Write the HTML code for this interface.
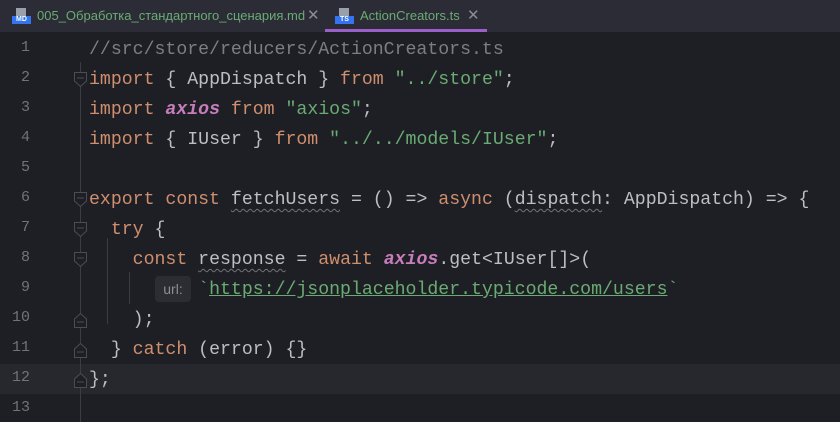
<!DOCTYPE html><html><head><style>
body{margin:0;width:840px;height:422px;overflow:hidden;background:#1e1f25;font-family:"Liberation Mono",monospace;}
.tabs{position:absolute;top:0;left:0;width:840px;height:32px;background:#2c2c37;font-family:"Liberation Sans",sans-serif;font-size:13px;color:#6aab73;}
.tab{position:absolute;top:0;height:32px;line-height:32px;}
.ic{position:absolute;top:8px;width:18px;height:16px}
.ic .p{position:absolute;left:4px;top:0;width:10px;height:8px;background:#9aa0aa}
.ic .l{position:absolute;left:0;bottom:0;width:19px;height:8px;background:#3574f0;color:#fff;font-size:7px;line-height:8px;font-weight:bold;text-align:center}
.x{color:#8a8d93;font-size:15px;position:absolute;top:0}
.ln{position:absolute;left:0;width:30px;text-align:right;color:#6f737a;font-size:15px}
.code{position:absolute;left:89px;white-space:pre;font-size:18.2px;color:#bcbec4}
.k{color:#cf8e6d}.s{color:#6aab73}.c{color:#7a7e85}.a{color:#c77dbb;font-style:italic;font-weight:bold}
.w{text-decoration:underline wavy #6f737a;text-underline-offset:4px;text-decoration-thickness:1px}
.f{position:absolute;left:74px;width:13px;height:15px}
</style></head><body>
<div class="tabs">
<div class="tab" style="left:12px"><div class="ic"><div class="p"></div><div class="l">MD</div></div><span style="position:absolute;left:25px;white-space:nowrap">005_Обработка_стандартного_сценария.md</span><span class="x" style="left:295px">✕</span></div>
<div class="tab" style="left:325px;width:162px;border-bottom:3px solid #9b5fc9;box-sizing:border-box;background:#2c2c37"><div class="ic" style="left:10px"><div class="p"></div><div class="l" style="background:#3574f0">TS</div></div><span style="position:absolute;left:35px;white-space:nowrap">ActionCreators.ts</span><span class="x" style="left:142px">✕</span></div>
</div>
<div style="position:absolute;left:0;top:364px;width:840px;height:30px;background:#26282e"></div>
<div style="position:absolute;left:80px;top:62px;width:1px;height:360px;background:#3b3d44"></div>
<div style="position:absolute;left:107px;top:238px;width:1px;height:86px;background:#3b3d44"></div>
<div style="position:absolute;left:129px;top:272px;width:1px;height:32px;background:#3b3d44"></div>
<div style="position:absolute;left:155px;top:276px;width:36px;height:26px;background:#2b2d33;border-radius:4px;color:#8a8d93;font:14px 'Liberation Sans',sans-serif;line-height:26px;text-align:center">url:</div>
<div id="g"></div>
<script>
var L=[
'<span class="c">//src/store/reducers/ActionCreators.ts</span>',
'<span class="k">import</span> { AppDispatch } <span class="k">from</span> <span class="s">"../store"</span>;',
'<span class="k">import</span> <span class="a">axios</span> <span class="k">from</span> <span class="s">"axios"</span>;',
'<span class="k">import</span> { IUser } <span class="k">from</span> <span class="s">"../../models/IUser"</span>;',
'',
'<span class="k">export const</span> <span class="w">fetchUsers</span> = () => <span class="k">async</span> (<span class="w">dispatch</span>: AppDispatch) => {',
'  <span class="k">try</span> {',
'    <span class="k">const</span> <span class="w">response</span> = <span class="k">await</span> <span class="a">axios</span>.get&lt;IUser[]&gt;(',
'          <span class="s">`<u>https://jsonplaceholder.typicode.com/users</u>`</span>',
'    );',
'  } <span class="k">catch</span> (error) {}',
'};',''];
var h='';for(var i=0;i<13;i++){var t=35+i*30;h+='<div class="ln" style="top:'+(t+4)+'px">'+(i+1)+'</div><div class="code" style="top:'+t+'px;line-height:30px;">'+L[i]+'</div>';}
var down=[2,6,7,8],up=[10,11,12];
down.forEach(function(n){var t=35+(n-1)*30+7;h+='<svg class="f" style="top:'+t+'px" viewBox="0 0 13 15"><path d="M0.5 0.5H12.5V9L6.5 14.5L0.5 9Z M3 6H10" fill="#1e1f25" stroke="#4a4d55"/></svg>';});
up.forEach(function(n){var t=35+(n-1)*30+8;h+='<svg class="f" style="top:'+t+'px" viewBox="0 0 13 15"><path d="M0.5 14.5H12.5V6L6.5 0.5L0.5 6Z M3 9H10" fill="#1e1f25" stroke="#4a4d55"/></svg>';});
document.getElementById('g').innerHTML=h;
</script>
</body></html>
